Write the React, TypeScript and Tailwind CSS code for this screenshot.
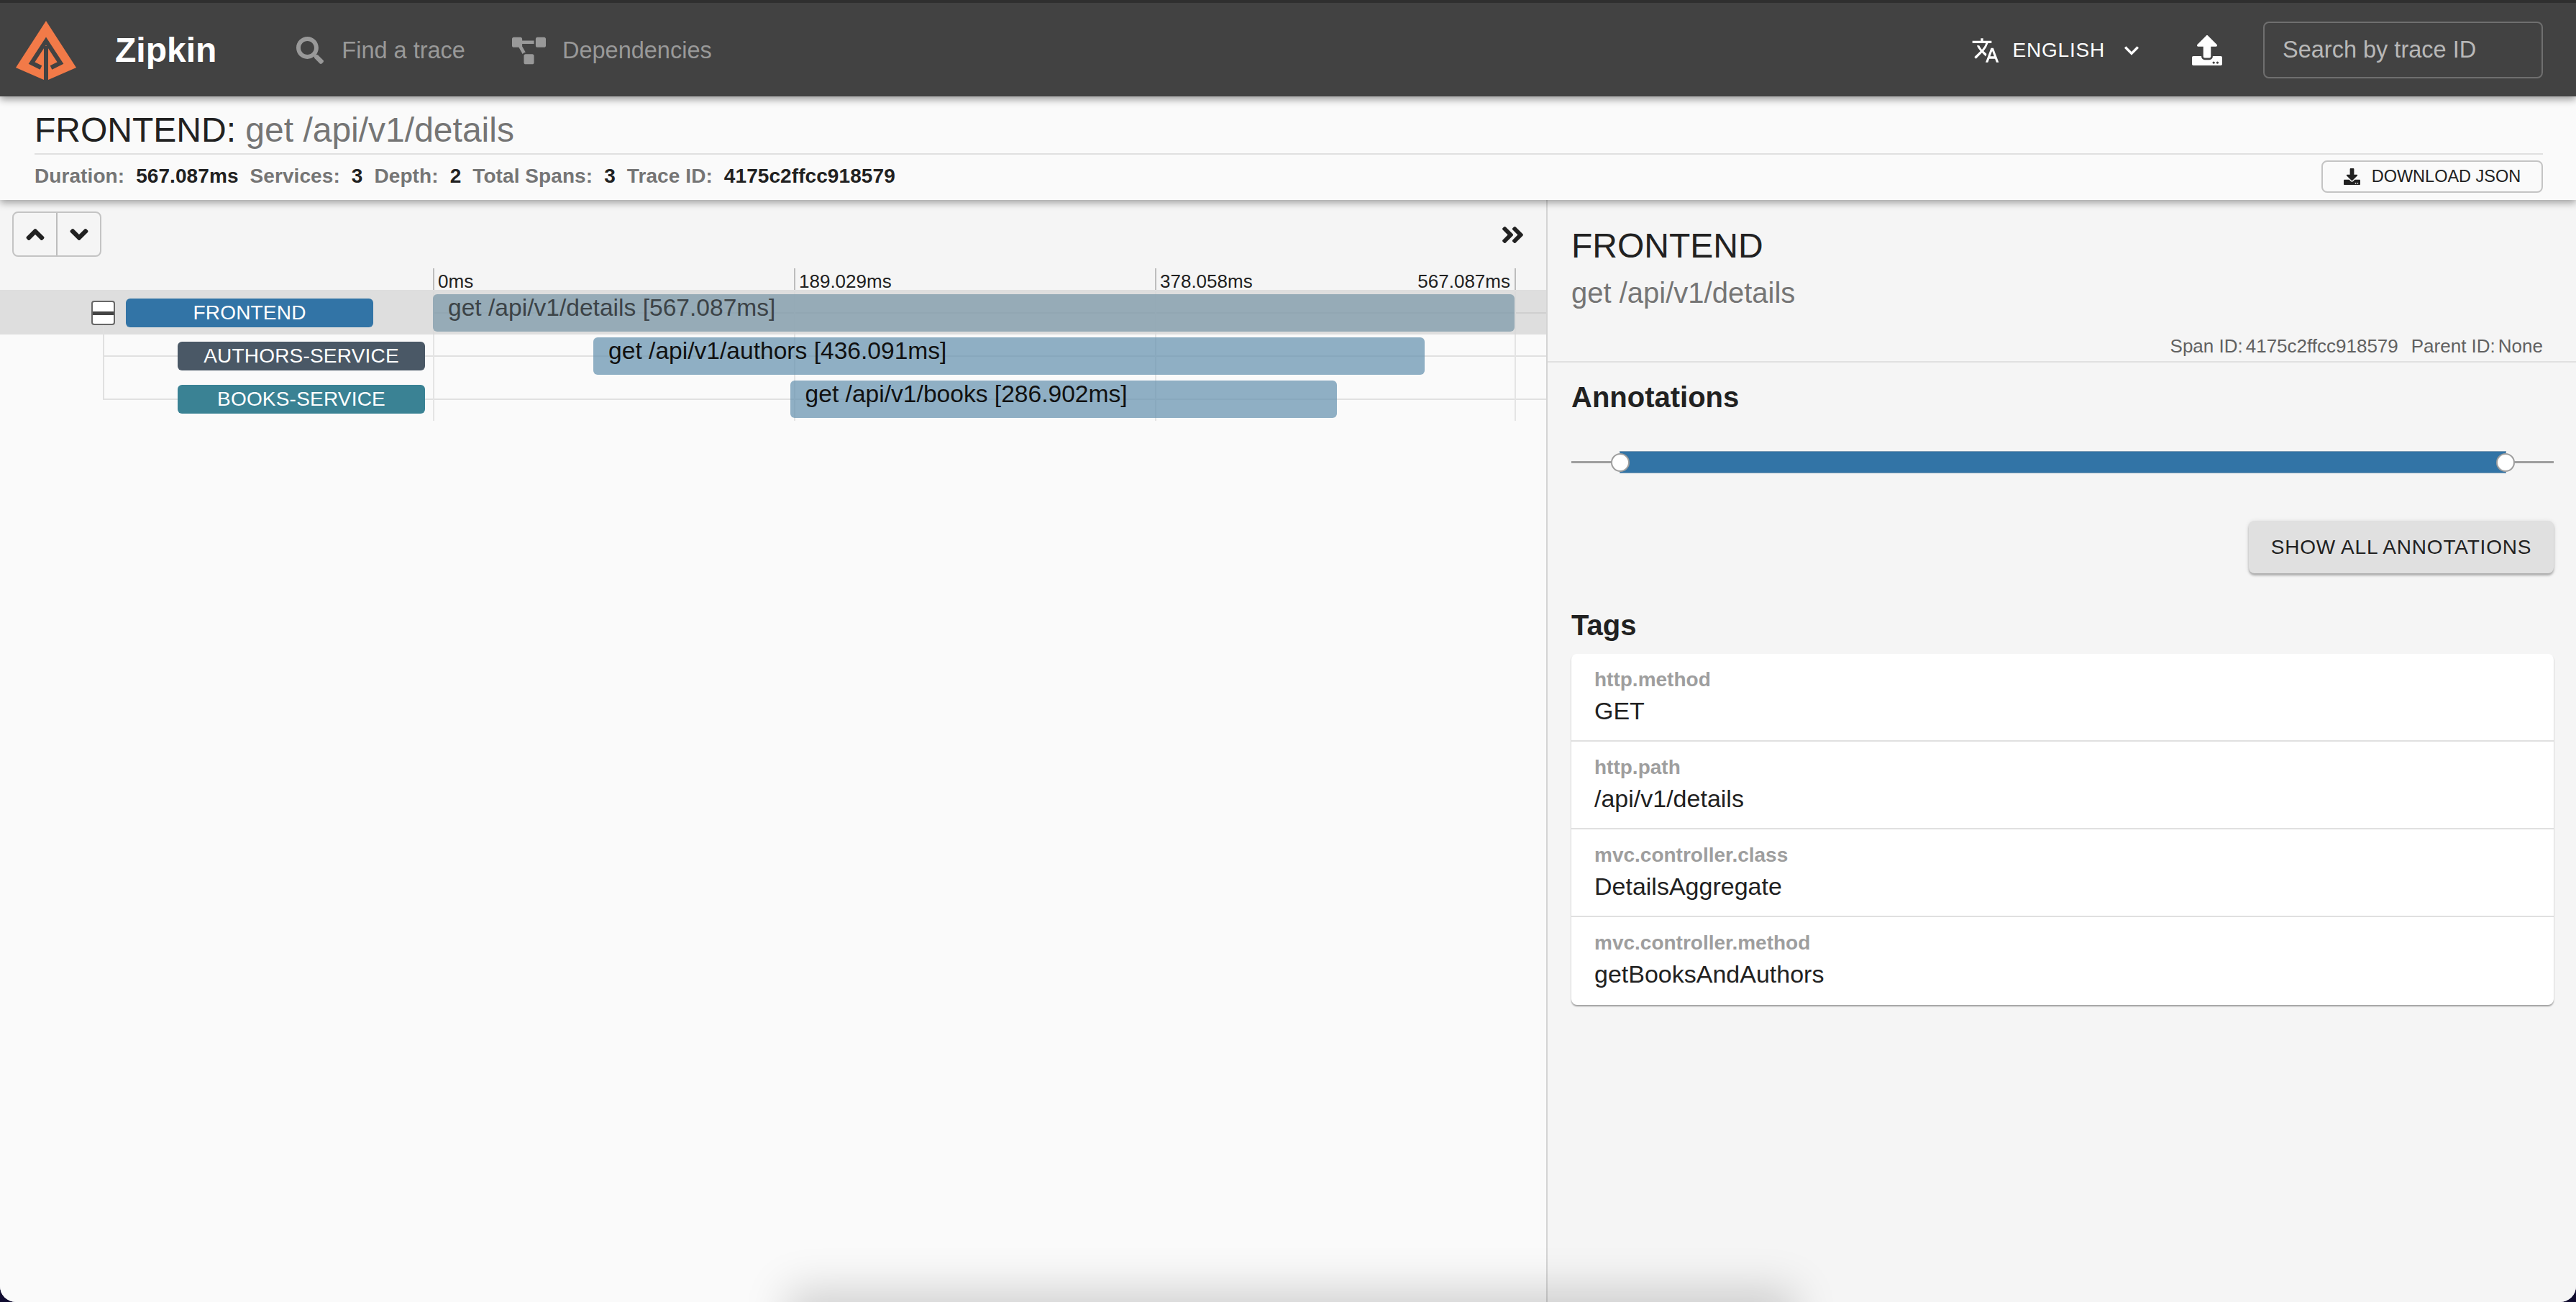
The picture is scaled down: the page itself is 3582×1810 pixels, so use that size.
import { FaAngleDoubleRight, FaAngleDown, FaAngleUp, FaDownload, FaProjectDiagram, FaSearch, FaUpload } from "react-icons/fa";
import { MdExpandMore, MdTranslate } from "react-icons/md";

const TOTAL = 567.087;
const TICKS = [0, 1 / 3, 2 / 3, 1];

const spans = [
  { service: "FRONTEND", color: "bg-[#3274a6]", name: "get /api/v1/details [567.087ms]", start: 0, duration: 567.087 },
  { service: "AUTHORS-SERVICE", color: "bg-[#4a5866]", name: "get /api/v1/authors [436.091ms]", start: 84, duration: 436.091 },
  { service: "BOOKS-SERVICE", color: "bg-[#3a8294]", name: "get /api/v1/books [286.902ms]", start: 187, duration: 286.902 },
];

const meta = [
  ["Duration:", "567.087ms"],
  ["Services:", "3"],
  ["Depth:", "2"],
  ["Total Spans:", "3"],
  ["Trace ID:", "4175c2ffcc918579"],
];

const tags = [
  ["http.method", "GET"],
  ["http.path", "/api/v1/details"],
  ["mvc.controller.class", "DetailsAggregate"],
  ["mvc.controller.method", "getBooksAndAuthors"],
];

const Logo = () => (
  <svg width="84" height="82" viewBox="22 29 84 82" className="shrink-0">
    <polygon points="64,29 106,94 67,111 61,111 22,94" fill="#f27a48" />
    <polyline points="57,94 44,87.5 64,57 84,87.5 71,94" fill="none" stroke="#424242" strokeWidth="6" />
    <line x1="64" y1="64" x2="64" y2="111" stroke="#424242" strokeWidth="6" />
  </svg>
);

const Header = () => (
  <div className="relative z-20 flex h-[134px] shrink-0 items-center border-t-4 border-[#2f2f2f] bg-[#424242] pl-[22px] pr-[46px] pt-[2px] shadow-[0_4px_10px_rgba(0,0,0,0.4)]">
    <Logo />
    <span className="ml-[54px] text-[48px] font-bold text-white">Zipkin</span>
    <FaSearch size={38} className="ml-[111px] text-[#999]" />
    <span className="ml-[25px] text-[32.5px] text-[#999]">Find a trace</span>
    <FaProjectDiagram size={47} className="ml-[65px] text-[#999]" />
    <span className="ml-[23px] text-[32.5px] text-[#999]">Dependencies</span>
    <div className="ml-auto flex items-center text-white">
      <MdTranslate size={40} />
      <span className="ml-[17px] text-[28px] tracking-[0.8px]">ENGLISH</span>
      <MdExpandMore size={40} className="ml-[17px]" />
      <FaUpload size={42} className="ml-[64px]" />
      <input
        placeholder="Search by trace ID"
        className="ml-[57px] -mt-[2px] h-[79px] w-[389px] rounded-lg border-2 border-[#6f6f6f] bg-transparent pl-[25px] text-[32.5px] placeholder:text-[#b8b8b8]"
      />
    </div>
  </div>
);

const SubHeader = () => (
  <div className="relative z-10 h-[144px] shrink-0 bg-[#fafafa] pl-12 pr-[46px] pt-[15px] shadow-[0_4px_10px_rgba(0,0,0,0.35)]">
    <h1 className="h-[66px] border-b-2 border-[#e0e0e0] text-[48px] leading-[64px] text-[#212121]">
      FRONTEND: <span className="text-[#757575]">get /api/v1/details</span>
    </h1>
    <div className="flex items-start justify-between pt-2">
      <div className="flex h-[45px] items-center gap-4 pb-[1px] text-[28px] font-bold tracking-[0.08px]">
        {meta.map(([label, value]) => (
          <div key={label} className="flex gap-4">
            <span className="text-[#757575]">{label}</span>
            <span className="text-[#212121]">{value}</span>
          </div>
        ))}
      </div>
      <button className="flex h-[45px] w-[308px] items-center justify-center gap-4 rounded-lg border-2 border-[#c4c4c4] text-[23.5px] text-[#212121]">
        <FaDownload size={23} />
        DOWNLOAD JSON
      </button>
    </div>
  </div>
);

const TimeAxis = () => (
  <div className="relative ml-[602px] h-[30px] w-[1506px]">
    {TICKS.map((tick, i) => (
      <div
        key={tick}
        className={`absolute top-0 h-full w-[2px] bg-[#bdbdbd] ${i === 3 ? "-translate-x-full" : ""}`}
        style={{ left: `${tick * 100}%` }}
      >
        <span className={`absolute top-[3px] whitespace-nowrap text-[26px] leading-[30px] text-[#212121] ${i === 3 ? "right-[8px]" : "left-[7px]"}`}>
          {(tick * TOTAL).toFixed(i === 0 ? 0 : 3)}ms
        </span>
      </div>
    ))}
  </div>
);

const SpanRow = ({ span, index }: { span: (typeof spans)[number]; index: number }) => {
  const root = index === 0;
  return (
    <div className={`relative flex ${root ? "h-[62px] bg-[#dedede] pt-[2px]" : "h-[60px]"}`}>
      <div className="relative flex w-[602px] shrink-0 items-center">
        {root && (
          <div className="absolute left-[127px] top-[13px] z-10 flex h-[34px] w-[33px] items-center rounded-[4px] border-2 border-[#666] bg-white">
            <div className="h-[5px] w-full bg-[#444]" />
          </div>
        )}
        {root && <div className="absolute bottom-0 left-[143px] top-[47px] w-[2px] bg-[#e0e0e0]" />}
        {index === 1 && <div className="absolute bottom-0 left-[143px] top-0 w-[2px] bg-[#e0e0e0]" />}
        {index === 2 && <div className="absolute left-[143px] top-0 h-[31px] w-[2px] bg-[#e0e0e0]" />}
        {!root && <div className="absolute left-[143px] top-[29px] h-[2px] w-[104px] bg-[#e0e0e0]" />}
        {!root && <div className="absolute left-[591px] top-[29px] h-[2px] w-[11px] bg-[#e0e0e0]" />}
        <div
          className={`relative flex h-10 w-[344px] items-center justify-center rounded-md text-[28px] tracking-[0.2px] text-white ${span.color} ${root ? "ml-[175px]" : "ml-[247px]"}`}
        >
          {span.service}
        </div>
      </div>
      <div className="relative flex-1">
        <div className={`absolute left-0 right-0 top-[29px] h-[2px] ${root ? "bg-[#cfcfcf]" : "bg-[#e0e0e0]"}`} />
        {TICKS.map((tick) => (
          <div
            key={tick}
            className={`absolute bottom-0 top-0 w-[2px] ${root ? "bg-[#dadada]" : "bg-[#e4e4e4]"}`}
            style={{ left: `${(tick * 1506) - (tick === 1 ? 2 : 0)}px` }}
          />
        ))}
        <div
          className={`relative mt-[4px] h-[52px] truncate rounded-md pl-[21px] text-[33.6px] leading-[38px] ${root ? "bg-[rgba(126,154,170,0.75)] text-[#3c4347]" : "bg-[rgba(107,150,177,0.75)] text-[#111]"}`}
          style={{
            marginLeft: `${(span.start / TOTAL) * 1506}px`,
            width: `${(span.duration / TOTAL) * 1506 - 2}px`,
          }}
        >
          {span.name}
        </div>
      </div>
    </div>
  );
};

const TimelinePanel = () => (
  <div className="w-[2152px] shrink-0 border-r-2 border-[#d4d4d4] bg-[#fafafa]">
    <div className="bg-[#f5f5f5]">
      <div className="flex h-[95px] items-start justify-between pl-[17px] pr-[28px] pt-4">
        <div className="flex h-[63px] w-[124px] rounded-lg border-2 border-[#c4c4c4] text-[#212121]">
          <div className="flex flex-1 items-center justify-center border-r-2 border-[#bdbdbd]">
            <FaAngleUp size={40} />
          </div>
          <div className="flex flex-1 items-center justify-center">
            <FaAngleDown size={40} />
          </div>
        </div>
        <FaAngleDoubleRight size={37} className="mt-[14px] text-[#212121]" />
      </div>
      <TimeAxis />
    </div>
    {spans.map((span, index) => (
      <SpanRow key={span.service} span={span} index={index} />
    ))}
  </div>
);

const AnnotationSlider = () => (
  <div className="mt-[46px] flex h-10 items-center">
    <div className="h-[3px] w-[67px] bg-[#9e9e9e]" />
    <div className="relative h-[31px] w-[1233px] border border-[#7f9db5] bg-[#3274a6]">
      <div className="absolute left-[-13px] top-[2px] h-[26px] w-[26px] rounded-full border-2 border-[#9e9e9e] bg-white" />
      <div className="absolute right-[-13px] top-[2px] h-[26px] w-[26px] rounded-full border-2 border-[#9e9e9e] bg-white" />
    </div>
    <div className="h-[3px] flex-1 bg-[#9e9e9e]" />
  </div>
);

const DetailPanel = () => (
  <div className="flex-1 bg-[#f5f5f5]">
    <div className="h-[226px] border-b-2 border-[#e0e0e0] pl-[33px] pr-[46px] pt-[36px]">
      <div className="text-[48px] leading-[56px] text-[#212121]">FRONTEND</div>
      <div className="mt-[13px] text-[40px] leading-[48px] text-[#757575]">get /api/v1/details</div>
      <div className="mt-[35px] flex justify-end gap-[18px] text-[26px] leading-[30px] text-[#616161]">
        <div className="flex gap-1">
          <span>Span ID:</span>
          <span>4175c2ffcc918579</span>
        </div>
        <div className="flex gap-1">
          <span>Parent ID:</span>
          <span>None</span>
        </div>
      </div>
    </div>
    <div className="flex flex-col pl-[33px] pr-[31px]">
      <h2 className="mt-[24px] text-[40px] font-bold leading-[48px] text-[#212121]">Annotations</h2>
      <AnnotationSlider />
      <button className="mt-[62px] h-[73px] w-[424px] self-end rounded-lg bg-[#e0e0e0] text-[28px] tracking-[0.8px] text-[#212121] shadow-[0_3px_3px_rgba(0,0,0,0.25),0_1px_6px_rgba(0,0,0,0.12)]">
        SHOW ALL ANNOTATIONS
      </button>
      <h2 className="mt-[48px] text-[40px] font-bold leading-[48px] text-[#212121]">Tags</h2>
      <div className="mt-[16px] rounded-lg bg-white shadow-[0_2px_2px_rgba(0,0,0,0.35)]">
        {tags.map(([key, value], i) => (
          <div key={key} className={`h-[122px] pl-8 pt-[18px] ${i < 3 ? "border-b-2 border-[#e0e0e0]" : ""}`}>
            <div className="text-[28px] font-bold leading-[36px] text-[#9e9e9e]">{key}</div>
            <div className="mt-[3px] text-[34px] leading-[44px] text-[#212121]">{value}</div>
          </div>
        ))}
      </div>
    </div>
  </div>
);

export default function App() {
  return (
    <div className="h-[1810px] w-[3582px] bg-[#100c30] font-['Liberation_Sans',sans-serif]">
      <div className="relative flex h-full flex-col overflow-hidden rounded-b-[22px] bg-[#fafafa]">
        <Header />
        <SubHeader />
        <div className="flex flex-1">
          <TimelinePanel />
          <DetailPanel />
        </div>
        {/* shadow of something sitting just below the page */}
        <div className="absolute left-[1095px] top-[1900px] h-[100px] w-[1400px] shadow-[0_-107px_60px_rgba(0,0,0,0.17)]" />
      </div>
    </div>
  );
}
